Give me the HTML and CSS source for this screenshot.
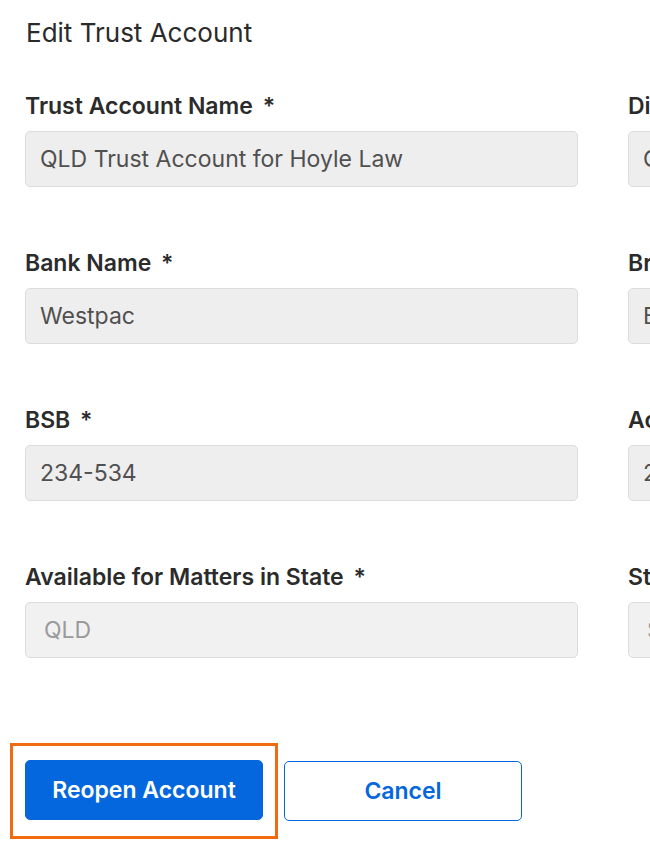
FILE: index.html
```html
<!DOCTYPE html>
<html lang="en">
<head>
    <meta charset="UTF-8">
    <title>Edit Trust Account</title>
    <link rel="stylesheet" href="styles.css">
</head>
<body>
<div class="page">
    <h1 class="title">Edit Trust Account</h1>
    <form class="form">
        <div class="field">
            <label>Trust Account Name <span class="req">*</span></label>
            <div class="input">QLD Trust Account for Hoyle Law</div>
        </div>
        <div class="field">
            <label>Display Name <span class="req">*</span></label>
            <div class="input">Cash at Bank - QLD Trust</div>
        </div>
        <div class="field">
            <label>Bank Name <span class="req">*</span></label>
            <div class="input">Westpac</div>
        </div>
        <div class="field">
            <label>Branch</label>
            <div class="input">Brisbane</div>
        </div>
        <div class="field">
            <label>BSB <span class="req">*</span></label>
            <div class="input">234-534</div>
        </div>
        <div class="field">
            <label>Account Number <span class="req">*</span></label>
            <div class="input">2345 6789</div>
        </div>
        <div class="field">
            <label>Available for Matters in State <span class="req">*</span></label>
            <div class="input select">QLD</div>
        </div>
        <div class="field">
            <label>Status</label>
            <div class="input select">Select status</div>
        </div>
    </form>
    <div class="actions">
        <div class="highlight">
            <button type="button" class="btn primary">Reopen Account</button>
        </div>
        <button type="button" class="btn secondary">Cancel</button>
    </div>
</div>
</body>
</html>
```

FILE: styles.css
```css
*{
    margin: 0;
    padding: 0;
    box-sizing: border-box;
}
html, body{
    width: 650px;
    height: 841px;
    overflow: hidden;
    background: #fff;
}
body{
    font-family: Inter, "Noto Sans", sans-serif;
    color: #2b2b2b;
}
.page{
    padding: 17px 0 0 25px;
    width: 1200px;
}
.title{
    font-size: 26px;
    font-weight: 400;
    line-height: 32px;
    color: #2a2a2a;
    padding-left: 1px;
}
.form{
    display: grid;
    grid-template-columns: 553px 553px;
    column-gap: 50px;
    row-gap: 62px;
    margin-top: 43px;
}
.field label{
    display: block;
    font-size: 23px;
    font-weight: 600;
    line-height: 28px;
    color: #2b2b2b;
    margin-bottom: 11px;
}
.field .req{
    margin-left: 4px;
}
.input{
    height: 56px;
    border: 1px solid #dcdcdc;
    border-radius: 5px;
    background: #eeeeee;
    padding: 0 14px;
    font-size: 23px;
    line-height: 54px;
    color: #505050;
    white-space: nowrap;
    overflow: hidden;
}
.input.select{
    background: #f1f1f1;
    color: #9a9a9a;
    padding-left: 18px;
}
.actions{
    display: flex;
    align-items: center;
    gap: 6px;
    margin-top: 85px;
    margin-left: -15px;
}
.highlight{
    border: 3px solid #f26a10;
    padding: 14px 12px 16px 12px;
}
.btn{
    width: 238px;
    height: 60px;
    border-radius: 5px;
    font-family: Inter, "Noto Sans", sans-serif;
    font-size: 23px;
    font-weight: 600;
    cursor: pointer;
}
.primary{
    background: #0567dd;
    border: 1px solid #0567dd;
    color: #fff;
}
.secondary{
    background: #fff;
    border: 1px solid #0567dd;
    color: #0567dd;
}
```
